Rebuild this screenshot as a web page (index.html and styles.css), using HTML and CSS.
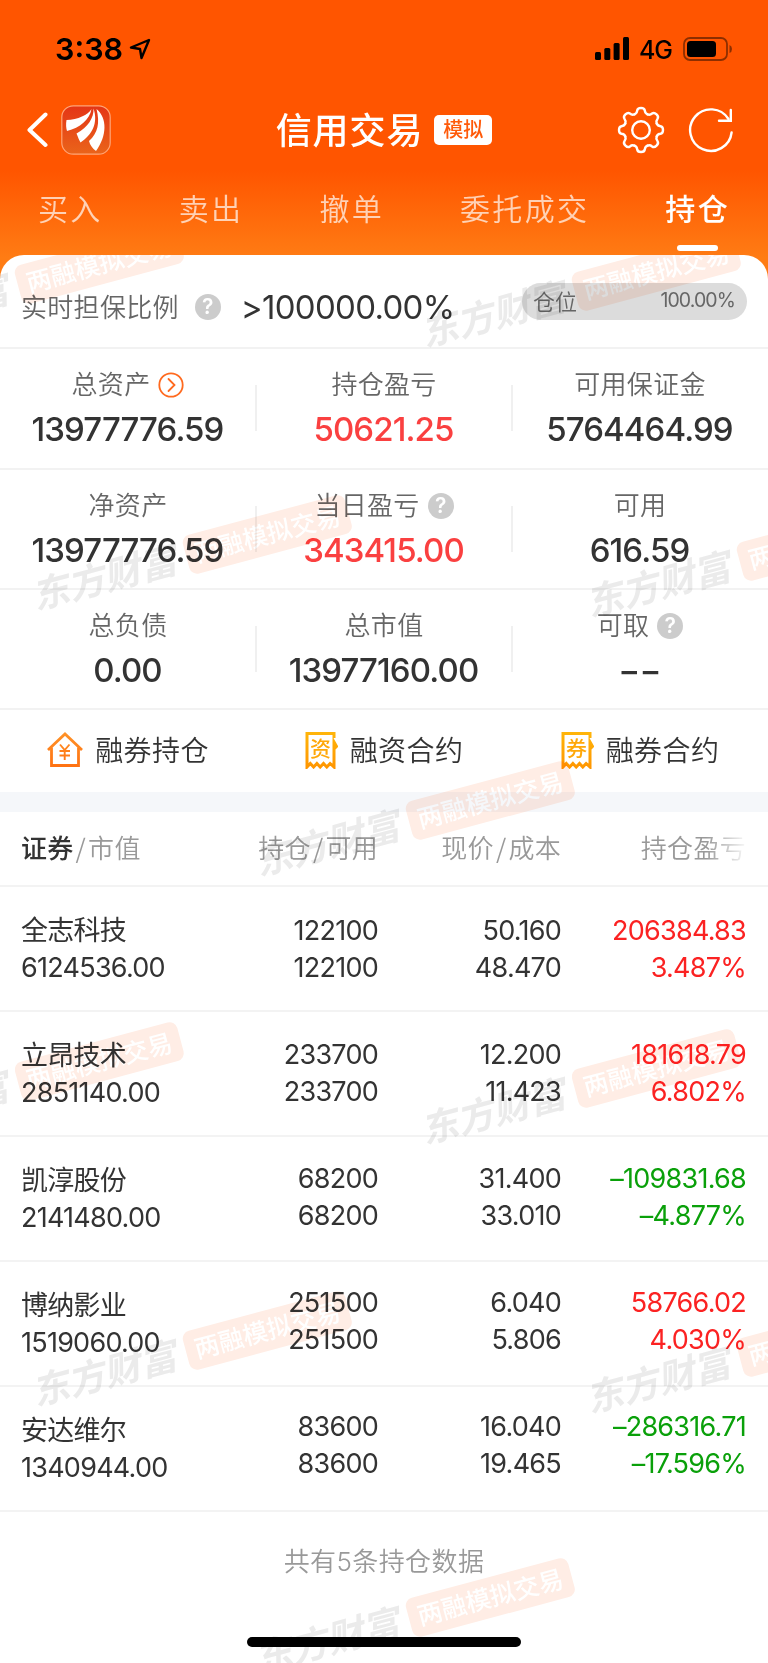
FILE: index.html
```html
<!DOCTYPE html>
<html lang="zh-CN">
<head>
  <meta charset="UTF-8" />
  <meta name="viewport" content="width=device-width, initial-scale=1.0"/>
  <title>信用交易</title>
  <link rel="stylesheet" href="styles.css">
</head>
<body>

<header class="top">
  <div class="status">
    <div class="status-left">
      <span class="time">3:38</span>
      <svg width="22" height="22" viewBox="0 0 22 22"><path d="M20 2 L2 9.5 L11 11 L12.5 20 Z" fill="none" stroke="#000" stroke-width="2.4" stroke-linejoin="round"/></svg>
    </div>
    <div class="status-right">
      <svg width="35" height="23" viewBox="0 0 35 23">
        <rect x="0" y="15" width="6" height="8" rx="1.5"/>
        <rect x="9.3" y="11" width="6" height="12" rx="1.5"/>
        <rect x="18.6" y="6" width="6" height="17" rx="1.5"/>
        <rect x="28" y="0" width="6" height="23" rx="1.5"/>
      </svg>
      <span class="network">4G</span>
      <svg width="50" height="24" viewBox="0 0 50 24">
        <rect x="1" y="1" width="43" height="22" rx="6" fill="none" stroke="#000" stroke-opacity=".45" stroke-width="1.8"/>
        <rect x="4" y="4" width="29" height="16" rx="3.5"/>
        <path d="M46.5 8 Q49 9 49 12 Q49 15 46.5 16 Z" fill-opacity=".45"/>
      </svg>
    </div>
  </div>

  <nav class="navbar">
    <div class="nav-left">
      <svg width="22" height="36" viewBox="0 0 22 36"><path d="M18.5 2.5 L2.5 18 L18.5 33" fill="none" stroke="#fff" stroke-width="4" stroke-linecap="round" stroke-linejoin="round"/></svg>
      <svg width="50" height="50" viewBox="0 0 50 50">
        <defs><linearGradient id="logo" x1="0" y1="0" x2="0" y2="1"><stop offset="0" stop-color="#e43516"/><stop offset="1" stop-color="#ea641a"/></linearGradient></defs>
        <rect x=".8" y=".8" width="48.4" height="48.4" rx="11.5" fill="url(#logo)" stroke="#ffa577" stroke-width="1.2"/>
        <path fill="#fff" d="M30.5 4 C27 10 17 14.500 5.500 15 C4.800 19 5 23 6 26 C19 22.500 28.500 15 30.500 4 Z"/>
        <path fill="#fff" d="M32.500 3.500 C33 13 27 22 15.500 28.500 C17 32 18 35 19.500 37.500 C31 30 37.500 18 32.500 3.500 Z"/>
        <path fill="#fff" d="M35.500 4 C39 18 37 28 28 36 C29 40 31.500 43.500 35 46 C46 31 46.500 13 35.500 4 Z"/>
      </svg>
    </div>
    <h1 class="title">信用交易<span class="tag">模拟</span></h1>
    <div class="nav-right">
      <svg width="48" height="48" viewBox="-24 -24 48 48" fill="none" stroke="#fff" stroke-width="2.4" stroke-linecap="round">
        <defs><path id="tooth" d="M-6.500 -15.700 C-4.500 -16.500 -4 -17.500 -3.800 -19.500 C-3.500 -21.600 -2.500 -22 0 -22 C2.500 -22 3.500 -21.600 3.800 -19.500 C4 -17.500 4.500 -16.500 6.500 -15.700"/></defs>
        <use href="#tooth"/>
        <use href="#tooth" transform="rotate(45)"/>
        <use href="#tooth" transform="rotate(90)"/>
        <use href="#tooth" transform="rotate(135)"/>
        <use href="#tooth" transform="rotate(180)"/>
        <use href="#tooth" transform="rotate(225)"/>
        <use href="#tooth" transform="rotate(270)"/>
        <use href="#tooth" transform="rotate(315)"/>
        <circle r="8.800"/>
      </svg>
      <svg width="46" height="46" viewBox="-23 -23 46 46" fill="none" stroke="#fff" stroke-width="2.4" stroke-linecap="round">
        <path d="M20.600 2.500 A20.800 20.800 0 1 1 17.500 -11"/>
        <path d="M19.800 -20 V-9.200 H8"/>
      </svg>
    </div>
  </nav>

  <div class="tabs">
    <span class="tab">买入</span>
    <span class="tab">卖出</span>
    <span class="tab">撤单</span>
    <span class="tab">委托成交</span>
    <span class="tab active">持仓</span>
  </div>
</header>

<main class="card">
  <section class="ratio">
    <span class="label">实时担保比例</span>
    <span class="help">?</span>
    <span class="ratio-value">&gt;100000.00%</span>
    <div class="pill"><span class="pill-name">仓位</span><span class="pill-value">100.00%</span></div>
  </section>

  <section class="stats first">
    <div class="stat">
      <div class="label">总资产
        <svg width="26" height="26" viewBox="0 0 26 26" fill="none" stroke="#ff6a1f" stroke-width="1.8"><circle cx="13" cy="13" r="11.700"/><path d="M10.500 7 L16.500 13 L10.500 19" stroke-linecap="round"/></svg>
      </div>
      <div class="value">13977776.59</div>
    </div>
    <div class="stat">
      <div class="label">持仓盈亏</div>
      <div class="value up">50621.25</div>
    </div>
    <div class="stat">
      <div class="label">可用保证金</div>
      <div class="value">5764464.99</div>
    </div>
  </section>
  <section class="stats">
    <div class="stat">
      <div class="label">净资产</div>
      <div class="value">13977776.59</div>
    </div>
    <div class="stat">
      <div class="label">当日盈亏<span class="help">?</span></div>
      <div class="value up">343415.00</div>
    </div>
    <div class="stat">
      <div class="label">可用</div>
      <div class="value">616.59</div>
    </div>
  </section>
  <section class="stats">
    <div class="stat">
      <div class="label">总负债</div>
      <div class="value">0.00</div>
    </div>
    <div class="stat">
      <div class="label">总市值</div>
      <div class="value">13977160.00</div>
    </div>
    <div class="stat">
      <div class="label">可取<span class="help">?</span></div>
      <div class="value">−−</div>
    </div>
  </section>

  <section class="actions">
    <div class="action">
      <svg width="36" height="36" viewBox="0 0 36 36" fill="none" stroke="url(#house)" stroke-width="2.800">
        <defs><linearGradient id="house" gradientUnits="userSpaceOnUse" x1="0" y1="0" x2="0" y2="36"><stop offset="0" stop-color="#ff9328"/><stop offset="1" stop-color="#ff7010"/></linearGradient></defs>
        <path d="M1 18 L18 2 L35 18"/>
        <path d="M4.500 15.500 V33.500 H31.500 V15.500"/>
        <path d="M13 12.500 L17.700 18 L22.500 12.500 M17.700 18 V28 M12.500 19 H23 M12.500 23.500 H23" stroke-width="1.900"/>
      </svg>
      <span>融券持仓</span>
    </div>
    <div class="action">
      <svg width="33" height="38" viewBox="0 0 33 38">
        <defs><linearGradient id="gold" gradientUnits="userSpaceOnUse" x1="0" y1="0" x2="0" y2="38"><stop offset="0" stop-color="#ffb60a"/><stop offset="1" stop-color="#ff9500"/></linearGradient></defs>
        <path d="M29 7 V2.500 H2 V36 L5.300 32.500 L8.600 36 L11.900 32.500 L15.200 36 L18.500 32.500 L21.800 36 L25.100 32.500 L29 36 V11 L31.500 15.500 L29 18" fill="none" stroke="url(#gold)" stroke-width="3"/>
        <text x="15.600" y="24.500" class="receipt-text">资</text>
      </svg>
      <span>融资合约</span>
    </div>
    <div class="action">
      <svg width="33" height="38" viewBox="0 0 33 38">
        <path d="M29 7 V2.500 H2 V36 L5.300 32.500 L8.600 36 L11.900 32.500 L15.200 36 L18.500 32.500 L21.800 36 L25.100 32.500 L29 36 V11 L31.500 15.500 L29 18" fill="none" stroke="url(#gold)" stroke-width="3"/>
        <text x="15.600" y="24.500" class="receipt-text">券</text>
      </svg>
      <span>融券合约</span>
    </div>
  </section>

  <div class="gap"></div>

  <section class="holdings">
    <div class="row head">
      <div><b>证券</b><span class="slash">/</span>市值</div>
      <div>持仓<span class="slash">/</span>可用</div>
      <div>现价<span class="slash">/</span>成本</div>
      <div class="fade">持仓盈亏</div>
    </div>
    <div class="row">
      <div class="name">全志科技<br>6124536.00</div>
      <div>122100<br>122100</div>
      <div>50.160<br>48.470</div>
      <div class="red">206384.83<br>3.487%</div>
    </div>
    <div class="row">
      <div class="name">立昂技术<br>2851140.00</div>
      <div>233700<br>233700</div>
      <div>12.200<br>11.423</div>
      <div class="red">181618.79<br>6.802%</div>
    </div>
    <div class="row">
      <div class="name">凯淳股份<br>2141480.00</div>
      <div>68200<br>68200</div>
      <div>31.400<br>33.010</div>
      <div class="green">–109831.68<br>–4.877%</div>
    </div>
    <div class="row">
      <div class="name">博纳影业<br>1519060.00</div>
      <div>251500<br>251500</div>
      <div>6.040<br>5.806</div>
      <div class="red">58766.02<br>4.030%</div>
    </div>
    <div class="row">
      <div class="name">安达维尔<br>1340944.00</div>
      <div>83600<br>83600</div>
      <div>16.040<br>19.465</div>
      <div class="green">–286316.71<br>–17.596%</div>
    </div>
  </section>

  <p class="total">共有5条持仓数据</p>

  <!-- watermark, laid over the whole card -->
  <div class="marks">
    <div class="mark m1"><i>东方财富</i><b>两融模拟交易</b></div>
    <div class="mark m2"><i>东方财富</i><b>两融模拟交易</b></div>
    <div class="mark m3"><i>东方财富</i><b>两融模拟交易</b></div>
    <div class="mark m4"><i>东方财富</i><b>两融模拟交易</b></div>
    <div class="mark m5"><i>东方财富</i><b>两融模拟交易</b></div>
    <div class="mark m6"><i>东方财富</i><b>两融模拟交易</b></div>
    <div class="mark m7"><i>东方财富</i><b>两融模拟交易</b></div>
    <div class="mark m8"><i>东方财富</i><b>两融模拟交易</b></div>
    <div class="mark m9"><i>东方财富</i><b>两融模拟交易</b></div>
    <div class="mark m10"><i>东方财富</i><b>两融模拟交易</b></div>
  </div>
  <div class="home-bar"></div>
</main>

</body>
</html>
```
FILE: styles.css
```css
* {
  box-sizing: border-box;
}
body {
  margin: 0;
  width: 768px;
  height: 1663px;
  overflow: hidden;
  font-family: Inter, "Noto Sans CJK SC", sans-serif;
  color: #333;
  background: linear-gradient(#ff5500 0, #ff5500 170px, #ff7c14 258px, #ff7c14 290px, #fff 290px);
}
svg {
  display: block;
  flex: none;
}

/* header */
.top {
  height: 255px;
}
.status {
  display: flex;
  justify-content: space-between;
  align-items: center;
  height: 93px;
  padding: 4px 35px 0 55px;
  color: #000;
}
.status-left,
.status-right {
  display: flex;
  align-items: center;
}
.time {
  font-size: 30.5px;
  font-weight: 600;
  margin-right: 6px;
}
.network {
  font-size: 25px;
  font-weight: 500;
  letter-spacing: -1px;
  margin: 2px 11px 0 9px;
}
.navbar {
  display: grid;
  grid-template-columns: 1fr auto 1fr;
  align-items: center;
  height: 75px;
  padding: 0 34px 1px 27px;
}
.nav-left,
.nav-right {
  display: flex;
  align-items: center;
  gap: 12px;
}
.nav-right {
  justify-content: flex-end;
  gap: 23px;
}
.title {
  display: flex;
  align-items: center;
  gap: 11px;
  margin: -4px 0 0 7px;
  font-size: 36px;
  font-weight: 500;
  letter-spacing: 0.9px;
  color: #fff;
}
.tag {
  margin-top: 4px;
  padding: 0 9px;
  border-radius: 5px;
  background: #fff;
  color: #ff5a0a;
  font-size: 20px;
  line-height: 30px;
  letter-spacing: 0;
}
.tabs {
  display: flex;
  justify-content: space-between;
  height: 87px;
  padding: 0 38px;
}
.tab {
  display: flex;
  flex-direction: column;
  align-items: center;
  padding-top: 19px;
  font-size: 30px;
  font-weight: 350;
  line-height: 44px;
  letter-spacing: 2.3px;
  color: rgba(255, 255, 255, 0.7);
}
.tab.active {
  color: #fff;
  font-weight: 500;
}
.tab.active::after {
  content: "";
  width: 41px;
  height: 6px;
  margin-top: 14px;
  border-radius: 3px;
  background: #fff;
}

/* card */
.card {
  position: relative;
  height: 1408px;
  overflow: hidden;
  border-radius: 24px 24px 0 0;
  background: #fff;
}
.label {
  display: flex;
  align-items: center;
  justify-content: center;
  font-size: 26px;
  font-weight: 350;
  line-height: 36px;
  letter-spacing: 0.3px;
  color: #666;
}
.help {
  width: 26px;
  height: 26px;
  border-radius: 50%;
  background: #ccc;
  color: #fff;
  font-size: 21px;
  font-weight: 600;
  line-height: 26px;
  letter-spacing: 0;
  text-align: center;
}
.ratio {
  display: flex;
  align-items: center;
  height: 94px;
  padding: 11px 21px 0;
  border-bottom: 2px solid #f2f2f2;
}
.ratio .label {
  margin-top: 2px;
}
.ratio .help {
  margin: 0 20px 0 16px;
}
.ratio-value {
  font-size: 33px;
  font-weight: 380;
  letter-spacing: -0.7px;
}
.pill {
  display: flex;
  align-items: center;
  justify-content: space-between;
  width: 225px;
  height: 37px;
  margin: -11px 0 0 auto;
  padding: 0 12px 2px 11px;
  border-radius: 19px;
  background: #dcdcdc;
  color: #666;
}
.pill-name {
  font-size: 22px;
  font-weight: 350;
}
.pill-value {
  font-size: 19.5px;
  letter-spacing: -0.9px;
}
.stats {
  display: grid;
  grid-template-columns: repeat(3, 1fr);
  height: 120px;
  border-bottom: 2px solid #f2f2f2;
}
.stats.first {
  height: 121px;
}
.stat {
  position: relative;
  padding-top: 18px;
  text-align: center;
}
.stat + .stat::before {
  content: "";
  position: absolute;
  left: -1px;
  top: 36px;
  width: 2px;
  height: 46px;
  background: #f0f0f0;
}
.stat .label {
  gap: 8px;
}
.value {
  margin: 6px 1px 0 0;
  font-size: 33px;
  font-weight: 500;
  line-height: 40px;
  letter-spacing: -0.9px;
}
.up {
  color: #fa4040;
}
.actions {
  display: grid;
  grid-template-columns: repeat(3, 1fr);
  height: 82px;
  padding-bottom: 2px;
}
.action {
  display: flex;
  align-items: center;
  justify-content: center;
  gap: 12px;
  font-size: 28px;
  font-weight: 350;
  letter-spacing: 0.4px;
}
.action span {
  margin-top: -3px;
}
.receipt-text {
  font-size: 21px;
  font-weight: 500;
  letter-spacing: 0;
  text-anchor: middle;
  fill: #ffa80a;
}
.gap {
  height: 20px;
  background: #f5f7fa;
}

/* holdings */
.row {
  display: grid;
  grid-template-columns: 215px 163px 183px 185px;
  height: 125px;
  padding-top: 25px;
  border-bottom: 2px solid #f3f3f3;
  font-size: 27px;
  font-weight: 380;
  line-height: 37px;
  letter-spacing: -0.75px;
  text-align: right;
}
.row > :first-child {
  padding-left: 21px;
  text-align: left;
}
/* the number columns run slightly tighter than the names */
.row:nth-child(3) > :not(.name) {
  margin-top: -1px;
}
.row:nth-child(4) > :not(.name) {
  margin-top: -2px;
}
.row:nth-child(5) > :not(.name) {
  margin-top: -3px;
}
.row:nth-child(6) > :not(.name) {
  margin-top: -4px;
}
.row.head {
  height: 75px;
  padding-top: 18px;
  font-size: 26px;
  font-weight: 350;
  letter-spacing: 0.3px;
  color: #999;
}
.head b {
  font-weight: 500;
  color: #333;
}
.slash {
  margin: 0 2px;
  font-family: "Noto Sans CJK SC", sans-serif;
  line-height: 1;
}
.fade {
  -webkit-mask-image: linear-gradient(to right, #000 145px, transparent 188px);
  mask-image: linear-gradient(to right, #000 145px, transparent 188px);
}
.red {
  color: #fb2222;
}
.green {
  color: #0aa00a;
}
.total {
  margin: 31px 0 0;
  font-size: 26px;
  font-weight: 350;
  line-height: 38px;
  letter-spacing: 0.4px;
  text-align: center;
  color: #999;
}

/* watermark */
.marks {
  position: absolute;
  inset: 0;
  mix-blend-mode: multiply;
  pointer-events: none;
}
.mark {
  position: absolute;
  display: flex;
  align-items: center;
  gap: 9px;
  width: 327px;
  height: 40px;
  transform: rotate(-15deg);
}
.mark i {
  width: 150px;
  font-size: 37px;
  font-weight: 700;
  line-height: 40px;
  color: #ebebeb;
}
.mark b {
  width: 168px;
  border-radius: 8px;
  background: #ffede5;
  color: #fff;
  font-size: 25px;
  font-weight: 500;
  line-height: 40px;
  text-align: center;
}
.m1 { left: -141px; top: 10px; }
.m2 { left: 416px; top: 17px; }
.m3 { left: 27px; top: 280px; }
.m4 { left: 581px; top: 287px; }
.m5 { left: 250px; top: 546px; }
.m6 { left: -141px; top: 807px; }
.m7 { left: 416px; top: 814px; }
.m8 { left: 27px; top: 1076px; }
.m9 { left: 581px; top: 1083px; }
.m10 { left: 250px; top: 1343px; }

.home-bar {
  position: absolute;
  left: 247px;
  bottom: 16px;
  width: 274px;
  height: 10px;
  border-radius: 5px;
  background: #000;
}
```
